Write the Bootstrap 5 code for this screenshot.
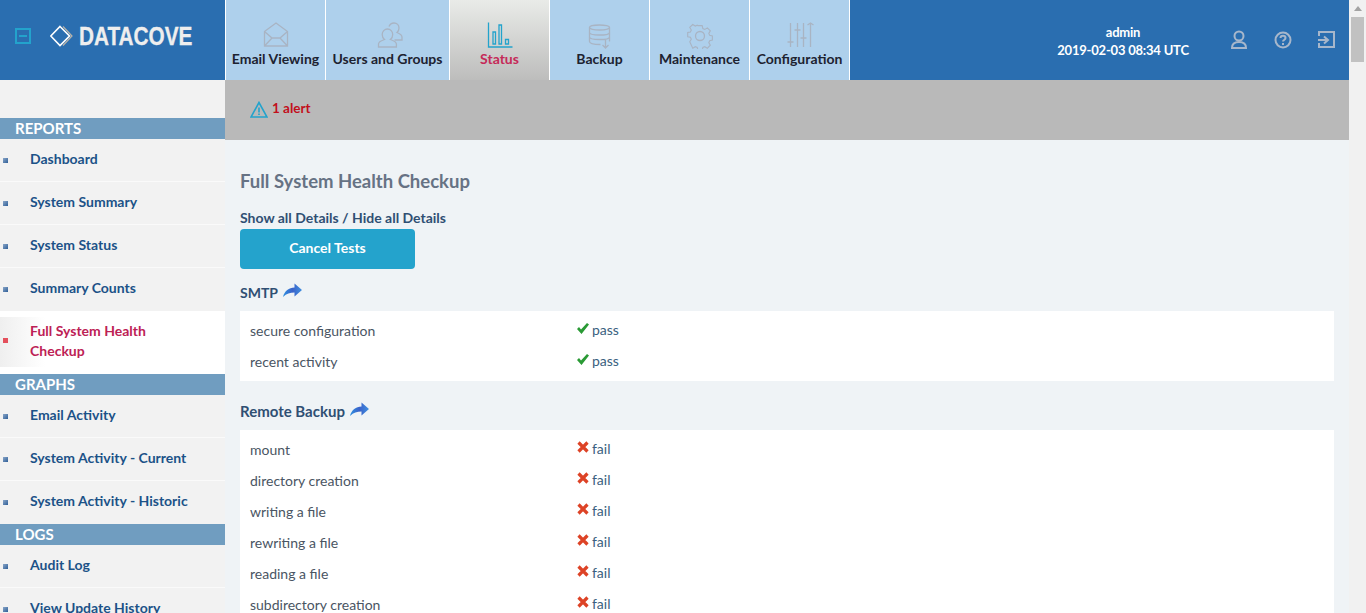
<!DOCTYPE html>
<html lang="en"><head><meta charset="utf-8"><title>Datacove</title>
<link href="https://cdn.jsdelivr.net/npm/bootstrap@5.3.0/dist/css/bootstrap.min.css" rel="stylesheet">
<style>
html,body{height:100%;overflow:hidden}
body{font-family:"Lato","Open Sans",sans-serif;font-size:14px;background:#eff3f6;color:#4a5563}
.shell{height:613px;overflow:hidden}
.fake-bar{width:17px;background:#f1f1f1;padding:6px 2px 0}
.fake-arrow{width:0;height:0;border:4px solid transparent;border-top:0;border-bottom:5px solid #a3a3a3;margin:0 auto 6px}
.fake-thumb{height:45px;background:#c1c1c1}
.top-bar{height:80px;background:#2a6eb0}
.brand-zone{width:225px;padding:0 0 8px 15px}
.collapse-ico{width:16px;height:16px;border:2px solid #23a3cc;position:relative}
.collapse-ico::after{content:"";position:absolute;left:2px;right:2px;top:5px;height:2px;background:#23a3cc}
.brand-logo{margin-left:19px}
.brand-name{font-family:"Liberation Sans",sans-serif;font-weight:700;font-size:25px;color:#eeeeee;transform:scaleX(.83);transform-origin:left;margin-left:6px;line-height:1;-webkit-text-stroke:.3px #eee}
.tab-item{width:100px;height:80px;background:#aed0ec;border-left:1px solid #fff;color:#1d2230;font-weight:700;font-size:14px;text-decoration:none;padding-top:20px;white-space:nowrap}
.tab-item.tab-wide{width:124px}
.tab-item.tab-on{background:linear-gradient(#e9ebe8,#bdbdbc);color:#c52a58}
.tab-item svg{height:28px;width:30px;display:block;flex:none;margin-top:1px;margin-bottom:-1px}
.tab-last{border-right:1px solid #fff;width:101px}
.user-zone{color:#fff;font-weight:700;font-size:13px;letter-spacing:-.2px;line-height:18px;width:150px;margin-right:30px;text-align:center;padding-top:2px}
.user-icons{gap:22px;margin-right:11px}
.side-col{width:225px;flex:none;background:#f2f2f2;padding-top:38px}
.side-head{background:#709dc0;height:21px;line-height:20px;color:#fff;font-weight:700;font-size:15px;padding-left:15px}
.side-link{display:block;height:43px;padding:10px 30px 0;color:#1c5288;font-weight:700;font-size:14px;line-height:20px;text-decoration:none;border-bottom:1px solid #fafafa;position:relative}
.side-link::before{content:"";position:absolute;left:3px;top:19px;width:5px;height:5px;background:linear-gradient(135deg,#8aa6c8,#2f5f98)}
.side-link.side-plain{border-bottom:0}
.side-link.side-on{height:63px;background:#fff linear-gradient(90deg,#efefef,#fff 45px) 0 6px/100% 50px no-repeat;color:#bd2155;border:0}
.side-link.side-on::before{background:#e4505c;top:27px}
.alert-band{height:60px;background:#b9b9b9;padding:0 0 2px 25px;color:#c20f1c;font-weight:700;font-size:13.5px}
.alert-text{margin-top:-2px}
.page-zone{padding:0 15px}
.page-title{font-size:18.5px;font-weight:700;color:#667284;margin:30px 0 0;line-height:22px}
.detail-links{font-weight:700;font-size:14px;color:#2f4f73;margin-top:16px;line-height:20px}
.cancel-btn{width:175px;height:40px;background:#24a3cc;border:0;border-radius:4px;color:#fff;font-weight:700;font-size:14px;display:block;padding-bottom:4px;margin-top:1px}
.sect-title{font-weight:700;font-size:14px;color:#2f4f73;line-height:20px;height:20px;gap:5px;margin-top:13px}
.sect-text{padding-top:1px}
.sect-title.sect-two{margin-top:20px;font-size:15px}
.sect-arrow{width:19px;height:15px;flex:none;margin-top:-3px}
.check-panel{background:#fff;padding:5px 10px 3px;margin-top:9px}
.check-row{height:31px;display:flex;align-items:center;font-size:14px;color:#4a5563;padding-bottom:2px}
.check-name{width:327px}
.check-val{color:#3a5f80;display:flex;align-items:center;margin-top:-2px}
.check-val svg{margin:-4px 3px 0 0;flex:none}
</style></head>
<body>
<svg width="0" height="0" class="position-absolute"><defs><linearGradient id="arrowfill" x1="0" x2="1" y1="0" y2="0"><stop offset="0" stop-color="#2e8fe0"/><stop offset=".5" stop-color="#3b62c9"/><stop offset="1" stop-color="#3f8fe0"/></linearGradient></defs></svg>
<div class="shell d-flex">
<div class="flex-grow-1 overflow-hidden">
<header class="top-bar d-flex">
  <div class="brand-zone d-flex align-items-center flex-shrink-0">
    <span class="collapse-ico flex-shrink-0"></span>
    <svg class="brand-logo flex-shrink-0" width="23" height="22" viewBox="0 0 23 22" fill="none"><path d="M13 1.500l9 9.500-9 9.500" stroke="#b9b3a8" stroke-width="1.200"/><path d="M10 1.500l9.500 9.500-9.500 9.500L.8 11z" stroke="#fff" stroke-width="1.600"/></svg>
    <span class="brand-name">DATACOVE</span>
  </div>
  <a class="tab-item d-flex flex-column align-items-center" href="#"><svg viewBox="0 0 30 28" fill="none" stroke="#a9b4c3" stroke-width="1.300"><path d="M3.500 10.500L15 2l11.500 8.500V25h-23zM3.500 10.500L11 17h8l7.500-6.500M3.500 25L11 17M26.500 25L19 17"/></svg>Email Viewing</a>
  <a class="tab-item tab-wide d-flex flex-column align-items-center" href="#"><svg viewBox="0 0 30 28" fill="none" stroke="#a9b4c3" stroke-width="1.300"><path d="M16 5.500c1-2.500 3-3.500 5-3.500 3 0 5 2.300 5 5 0 2-.8 3.500-2 4.500 2.500 1 5 2 5 4.500v3h-7.500"/><path d="M5.500 26v-3c0-2.500 3-3.500 6-4.500-1.300-1-2.300-2.700-2.300-5C9.200 10.500 11.500 8 14.500 8s5.200 2.500 5.200 5.500c0 2.300-1 4-2.300 5 3 1 6 2 6 4.500v3z"/></svg>Users and Groups</a>
  <a class="tab-item tab-on d-flex flex-column align-items-center" href="#"><svg viewBox="0 0 30 28" fill="none" stroke="#23a3cc" stroke-width="1.300"><path d="M3.500 1.500v24.500h24M8 11h2.500v12H8zM14 4h2.500v19H14zM20.500 18.500h3V23h-3z"/></svg>Status</a>
  <a class="tab-item d-flex flex-column align-items-center" href="#"><svg viewBox="0 0 30 28" fill="none" stroke="#a9b4c3" stroke-width="1.300"><ellipse cx="14.500" cy="6.500" rx="10" ry="2.500"/><path d="M4.500 6.500v14c0 2 4 3 11 3M24.500 6.500v14M4.500 11.500c0 2 5 2.500 10 2.500s10-.5 10-2.500M4.500 16c0 2 5 2.500 10 2.500s10-.5 10-2.500M20.500 18v9m-3-3l3 3 3-3"/></svg>Backup</a>
  <a class="tab-item d-flex flex-column align-items-center" href="#"><svg viewBox="0 0 30 28" fill="none" stroke="#a9b4c3" stroke-width="1.300"><circle cx="15" cy="15" r="4.500"/><path d="M12.500 3.500h5l.8 3.400 2.300 1 3-1.800 3.500 3.500-1.800 3 1 2.300 3.200.6v5l-3.200.7-1 2.300 1.800 3-3.500 3.500-3-1.800-2.300 1-.8 3.200h-5l-.8-3.200-2.300-1-3 1.800L2.900 22.500l1.800-3-1-2.300-3.200-.7v-5l3.200-.6 1-2.300-1.800-3 3.500-3.500 3 1.800 2.300-1z" transform="translate(2.300 1.700) scale(.85)"/></svg>Maintenance</a>
  <a class="tab-item tab-last d-flex flex-column align-items-center" href="#"><svg viewBox="0 0 30 28" fill="none" stroke="#a9b4c3" stroke-width="1.300"><path d="M5.500 2v24M12.500 2v24M18.500 2v24M25.500 2v24M2.500 21h6M9.500 9h6M15.500 17h6M22.500 4l3-2 3 2"/></svg>Configuration</a>
  <div class="d-flex align-items-center ms-auto">
    <div class="user-zone"><div>admin</div><div>2019-02-03 08:34 UTC</div></div>
    <div class="user-icons d-flex">
      <svg width="22" height="22" viewBox="0 0 22 22" fill="none" stroke="#a7b7cb" stroke-width="2"><circle cx="11" cy="7" r="4.500"/><path d="M4 19c0-4 3-6 7-6s7 2 7 6z"/></svg>
      <svg width="22" height="22" viewBox="0 0 22 22" fill="none" stroke="#a7b7cb" stroke-width="2"><circle cx="11" cy="11" r="7.500"/><path d="M8.500 9c0-3 5-3 5 0 0 2-2.500 2-2.500 3.500M11 14v2"/></svg>
      <svg width="22" height="22" viewBox="0 0 22 22" fill="none" stroke="#a7b7cb" stroke-width="2"><path d="M3 7V3h15v15H3v-4M2 11h9M8 7.500l4 3.500-4 3.500"/></svg>
    </div>
  </div>
</header>
<div class="d-flex">
  <nav class="side-col">
    <div class="side-head">REPORTS</div>
    <a class="side-link" href="#">Dashboard</a>
    <a class="side-link" href="#">System Summary</a>
    <a class="side-link" href="#">System Status</a>
    <a class="side-link side-plain" href="#">Summary Counts</a>
    <a class="side-link side-on" href="#">Full System Health Checkup</a>
    <div class="side-head">GRAPHS</div>
    <a class="side-link" href="#">Email Activity</a>
    <a class="side-link" href="#">System Activity - Current</a>
    <a class="side-link side-plain" href="#">System Activity - Historic</a>
    <div class="side-head">LOGS</div>
    <a class="side-link" href="#">Audit Log</a>
    <a class="side-link" href="#">View Update History</a>
  </nav>
  <main class="flex-grow-1">
    <div class="alert-band d-flex align-items-center gap-1">
      <svg width="18" height="17" viewBox="0 0 18 17" fill="none" stroke="#23a3cc" stroke-width="1.600"><path d="M9 1.500L1 16h16zM9 6.500v5M9 12.500v1.500"/></svg><span class="alert-text">1 alert</span>
    </div>
    <div class="page-zone">
      <h1 class="page-title">Full System Health Checkup</h1>
      <div class="detail-links">Show all Details / Hide all Details</div>
      <button class="cancel-btn" type="button">Cancel Tests</button>
      <div class="sect-title d-flex align-items-center"><span class="sect-text">SMTP</span> <svg class="sect-arrow" viewBox="0 0 19 15"><path d="M0 14C1.500 8 6 4.500 11.500 4.500V.5L19 7l-7.500 6.500V9.500C7 9.500 3.500 10.500 0 14z" fill="url(#arrowfill)"/></svg></div>
      <div class="check-panel">
        <div class="check-row"><div class="check-name">secure configuration</div><div class="check-val"><svg width="12" height="12" viewBox="0 0 12 12"><path d="M0 7l2-2 2 2.500L10 1l2 1.500L4.500 12z" fill="#2a9a35"/></svg>pass</div></div>
        <div class="check-row"><div class="check-name">recent activity</div><div class="check-val"><svg width="12" height="12" viewBox="0 0 12 12"><path d="M0 7l2-2 2 2.500L10 1l2 1.500L4.500 12z" fill="#2a9a35"/></svg>pass</div></div>
      </div>
      <div class="sect-title sect-two d-flex align-items-center"><span>Remote Backup</span> <svg class="sect-arrow" viewBox="0 0 19 15"><path d="M0 14C1.500 8 6 4.500 11.500 4.500V.5L19 7l-7.500 6.500V9.500C7 9.500 3.500 10.500 0 14z" fill="url(#arrowfill)"/></svg></div>
      <div class="check-panel">
        <div class="check-row"><div class="check-name">mount</div><div class="check-val"><svg width="12" height="12" viewBox="0 0 12 12"><path d="M1.500 1.500l9 9M10.500 1.500l-9 9" stroke="#dd4326" stroke-width="3.200"/></svg>fail</div></div>
        <div class="check-row"><div class="check-name">directory creation</div><div class="check-val"><svg width="12" height="12" viewBox="0 0 12 12"><path d="M1.500 1.500l9 9M10.500 1.500l-9 9" stroke="#dd4326" stroke-width="3.200"/></svg>fail</div></div>
        <div class="check-row"><div class="check-name">writing a file</div><div class="check-val"><svg width="12" height="12" viewBox="0 0 12 12"><path d="M1.500 1.500l9 9M10.500 1.500l-9 9" stroke="#dd4326" stroke-width="3.200"/></svg>fail</div></div>
        <div class="check-row"><div class="check-name">rewriting a file</div><div class="check-val"><svg width="12" height="12" viewBox="0 0 12 12"><path d="M1.500 1.500l9 9M10.500 1.500l-9 9" stroke="#dd4326" stroke-width="3.200"/></svg>fail</div></div>
        <div class="check-row"><div class="check-name">reading a file</div><div class="check-val"><svg width="12" height="12" viewBox="0 0 12 12"><path d="M1.500 1.500l9 9M10.500 1.500l-9 9" stroke="#dd4326" stroke-width="3.200"/></svg>fail</div></div>
        <div class="check-row"><div class="check-name">subdirectory creation</div><div class="check-val"><svg width="12" height="12" viewBox="0 0 12 12"><path d="M1.500 1.500l9 9M10.500 1.500l-9 9" stroke="#dd4326" stroke-width="3.200"/></svg>fail</div></div>
      </div>
    </div>
  </main>
</div>
</div>
<div class="fake-bar flex-shrink-0"><div class="fake-arrow"></div><div class="fake-thumb"></div></div>
</div>
<script src="https://cdn.jsdelivr.net/npm/bootstrap@5.3.0/dist/js/bootstrap.bundle.min.js"></script>
</body></html>
